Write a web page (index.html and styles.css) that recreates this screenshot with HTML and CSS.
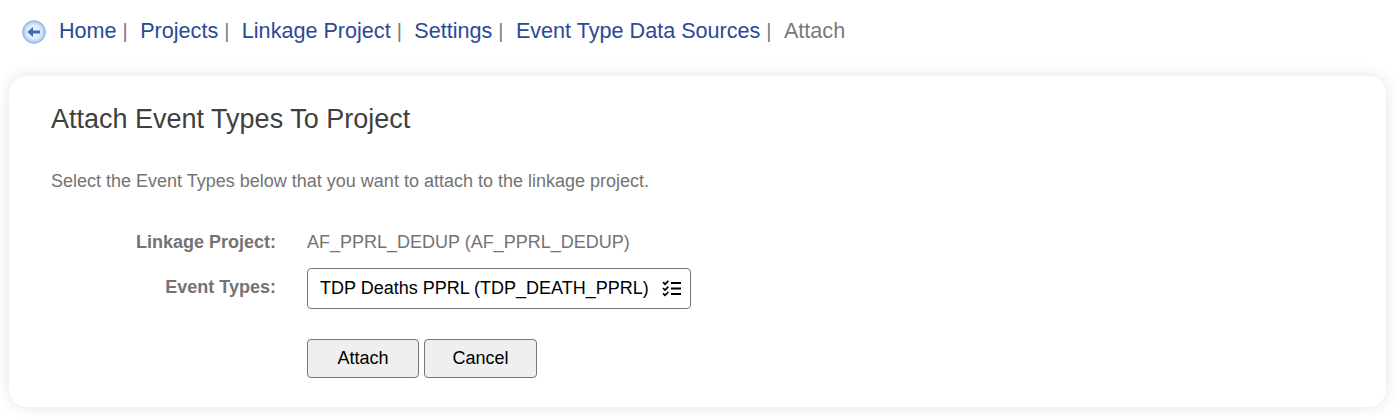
FILE: index.html
```html
<!DOCTYPE html>
<html lang="en">
<head>
  <meta charset="UTF-8">
  <title>Attach Event Types To Project</title>
  <link rel="stylesheet" href="styles.css">
</head>
<body>
  <nav class="crumbs">
    <svg class="back_icon" viewBox="0 0 24 24" width="24" height="24">
      <defs>
        <radialGradient id="backFill" cx="50%" cy="50%" r="52%">
          <stop offset="0%" stop-color="#f2f7fe"/>
          <stop offset="62%" stop-color="#dbe8fb"/>
          <stop offset="100%" stop-color="#93bbec"/>
        </radialGradient>
      </defs>
      <circle cx="12" cy="12" r="11.3" fill="url(#backFill)" stroke="#8db2e2" stroke-width="1"/>
      <path d="M5.5 12 L11 7 V10.6 H18 V13.4 H11 V17 Z" fill="#3a6cb0"/>
    </svg>
    <a href="#">Home</a><span class="sep">|</span>
    <a href="#">Projects</a><span class="sep">|</span>
    <a href="#">Linkage Project</a><span class="sep">|</span>
    <a href="#">Settings</a><span class="sep">|</span>
    <a href="#">Event Type Data Sources</a><span class="sep">|</span>
    <span class="current">Attach</span>
  </nav>

  <main class="card">
    <h1>Attach Event Types To Project</h1>
    <p class="intro">Select the Event Types below that you want to attach to the linkage project.</p>

    <div class="form_row project_row">
      <label>Linkage Project:</label>
      <span class="value">AF_PPRL_DEDUP (AF_PPRL_DEDUP)</span>
    </div>
    <div class="form_row types_row">
      <label>Event Types:</label>
      <div class="picker">
        <span>TDP Deaths PPRL (TDP_DEATH_PPRL)</span>
        <svg class="list_icon" viewBox="0 0 19 17" width="19" height="17">
          <path d="M1 2.2 L3 4.2 L6.4 .8 M1 8 L3 10 L6.4 6.6 M1 13.4 L3 15.4 L6.4 12" fill="none" stroke="#000" stroke-width="1.7"/>
          <path d="M9 3 H19 M9 8.5 H19 M9 14 H19" fill="none" stroke="#000" stroke-width="1.8"/>
        </svg>
      </div>
    </div>
    <div class="actions">
      <button class="btn attach_btn" type="button">Attach</button>
      <button class="btn cancel_btn" type="button">Cancel</button>
    </div>
  </main>
</body>
</html>
```

FILE: styles.css
```css
html, body {
  margin: 0;
  padding: 0;
}
body {
  background-color: #fff;
  font-family: "Liberation Sans", Arial, sans-serif;
  height: 417px;
  overflow: hidden;
}
.crumbs {
  display: flex;
  align-items: center;
  height: 62px;
  padding-left: 22px;
  font-size: 21.6px;
  color: #7a7a7a;
}
.back_icon {
  margin-right: 13px;
  margin-top: 1px;
}
.crumbs a {
  color: #2b4a94;
  text-decoration: none;
}
.sep {
  margin-left: 6px;
  margin-right: 12.4px;
  font-size: 20px;
  color: #7a7a7a;
}
.current {
  color: #7a7a7a;
}
.card {
  margin: 14px 11px 0 9px;
  height: 331px;
  box-sizing: border-box;
  padding: 28px 42px 0;
  background-color: #fff;
  border-radius: 18px;
  box-shadow: 0 0 16px rgba(0, 0, 0, .11);
}
h1 {
  margin: 0;
  font-size: 27px;
  font-weight: normal;
  line-height: 31px;
  color: #404040;
}
.intro {
  margin: 36px 0 0;
  font-size: 18px;
  line-height: 20px;
  color: #737373;
}
.form_row {
  display: flex;
  align-items: center;
  font-size: 18px;
  color: #737373;
}
.form_row label {
  width: 225px;
  text-align: right;
  font-weight: bold;
  margin-right: 31px;
}
.project_row {
  margin-top: 40px;
  line-height: 22px;
}
.types_row {
  margin-top: 15px;
}
.types_row label {
  margin-bottom: 2px;
}
.picker {
  display: flex;
  align-items: center;
  justify-content: space-between;
  box-sizing: border-box;
  width: 384px;
  height: 41px;
  padding: 0 9px 0 12px;
  border: 1px solid #767676;
  border-radius: 4px;
  color: #000;
  background-color: #fff;
}
.actions {
  display: flex;
  gap: 5px;
  margin-top: 30px;
  margin-left: 256px;
}
.btn {
  box-sizing: border-box;
  height: 39px;
  border: 1px solid #767676;
  border-radius: 4px;
  background-color: #efefef;
  color: #000;
  font-family: inherit;
  font-size: 18px;
  padding: 0;
}
.attach_btn {
  width: 112px;
}
.cancel_btn {
  width: 113px;
}
```
